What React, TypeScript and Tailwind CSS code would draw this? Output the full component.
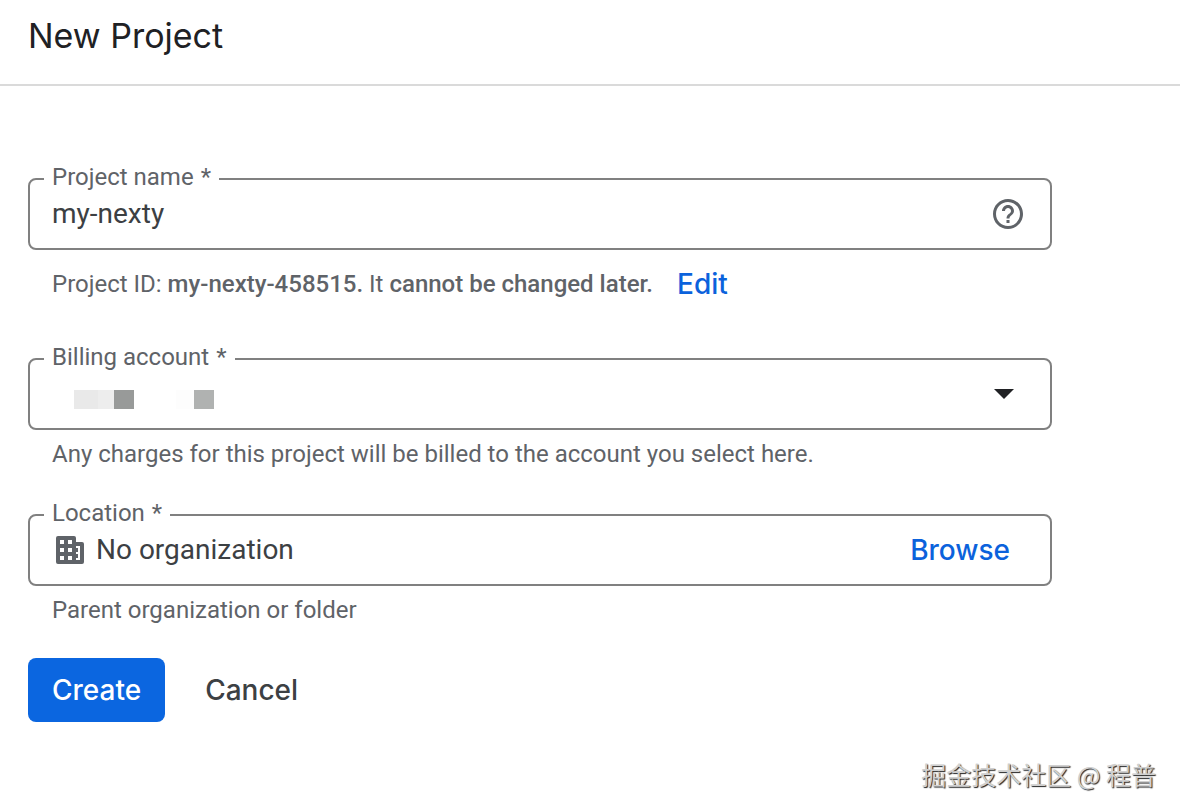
import { useState, type ReactNode } from 'react'
import { MdHelpOutline } from 'react-icons/md'

interface FieldProps {
  id:       string
  label:    string
  children: ReactNode
}

// Outlined box, the legend cuts the notch in the top border
function Field({ id, label, children }: FieldProps) {
  return (
    <fieldset className="min-w-0 rounded-lg border-2 border-[#808080] pb-[11px]">
      <legend className="ml-[14px] px-2 pb-1 text-2xl leading-5 text-[#5f6368]">
        <label htmlFor={id} className="flex gap-[7px]">{label} <span>*</span></label>
      </legend>
      <div className="relative flex h-[46px] items-center pl-[22px] pr-6">
        {children}
      </div>
    </fieldset>
  )
}

function OrgIcon() {
  return (
    <svg className="ml-1 shrink-0 text-[#5f6368]" width="28" height="28" viewBox="0 0 28 28" fill="currentColor" aria-hidden="true">
      <path
        fillRule="evenodd"
        d="M2 0h16a2 2 0 0 1 2 2v4h6a2 2 0 0 1 2 2v18a2 2 0 0 1-2 2H2a2 2 0 0 1-2-2V2a2 2 0 0 1 2-2z
           M4 4v4h4V4z M12 4v4h4V4z M4 12v4h4v-4z M12 12v4h4v-4z M4 20v4h4v-4z M12 20v4h4v-4z
           M20 10v2h2v4h-2v2h2v4h-2v2h4V10z"
      />
    </svg>
  )
}

export default function App() {
  const [name, setName] = useState('my-nexty')

  return (
    <div className="bg-white font-[Roboto,sans-serif] text-[#3c4043]">
      <header className="border-b-2 border-[#dadada] px-7 pb-6 pt-3">
        <h1 className="font-[Inter,sans-serif] text-[34px] leading-[48px] text-[#202124]">New Project</h1>
      </header>

      <form className="px-7 pt-[81px]" onSubmit={e => e.preventDefault()}>
        <div className="max-w-[1024px]">
          <Field id="name" label="Project name">
            <input
              id="name"
              value={name}
              onChange={e => setName(e.target.value)}
              className="min-w-0 flex-1 bg-transparent text-[28px] leading-9 focus:outline-none"
            />
            <button type="button" aria-label="Help" className="text-[#5f6368]">
              <MdHelpOutline size={36} />
            </button>
          </Field>
          <div className="mb-[29px] flex items-center gap-6 py-4 pl-6">
            <p className="text-2xl leading-9 text-[#5f6368]">
              Project ID: <b className="font-medium">my-nexty-458515.</b> It <b className="font-medium">cannot be changed later.</b>
            </p>
            <button type="button" className="font-[Inter,sans-serif] text-[28px] font-medium leading-9 text-[#0b62dc]">Edit</button>
          </div>

          <Field id="billing" label="Billing account">
            <select id="billing" className="h-full w-full appearance-none bg-transparent focus:outline-none">
              <option value="" />
            </select>
            <svg className="pointer-events-none absolute left-11 top-[19px]" width="140" height="19" shapeRendering="crispEdges" aria-hidden="true">
              <rect width="24" height="19" fill="#e9e9e9" />
              <rect x="24" width="16" height="19" fill="#ededed" />
              <rect x="40" width="20" height="19" fill="#989a99" />
              <rect x="102" width="18" height="19" fill="#fdfdfd" />
              <rect x="120" width="20" height="19" fill="#b0b2b1" />
            </svg>
            <svg className="pointer-events-none absolute right-9 top-[18px]" width="20" height="10" viewBox="0 0 20 10" aria-hidden="true">
              <path d="M0 0h20L10 10z" fill="#202124" />
            </svg>
          </Field>
          <p className="mb-[25px] py-3 pl-6 text-2xl leading-6 text-[#5f6368]">
            Any charges for this project will be billed to the account you select here.
          </p>

          <Field id="location" label="Location">
            <OrgIcon />
            <input
              id="location"
              readOnly
              value="No organization"
              className="ml-3 min-w-0 flex-1 bg-transparent text-[28px] leading-9 focus:outline-none"
            />
            <button type="button" className="mr-4 font-[Inter,sans-serif] text-[28px] font-medium leading-9 text-[#0b62dc]">Browse</button>
          </Field>
          <p className="mb-6 py-3 pl-6 text-2xl leading-6 text-[#5f6368]">Parent organization or folder</p>

          <div className="flex gap-4 font-[Inter,sans-serif] text-[28px] font-medium leading-9">
            <button type="submit" className="rounded-lg bg-[#0b66e0] px-6 py-[14px] text-white">Create</button>
            <button type="button" className="px-6 py-[14px]">Cancel</button>
          </div>
        </div>
      </form>

      <footer className="px-6 pb-4 pt-[34px] text-right font-['Noto_Sans_CJK_SC',sans-serif] text-[25px] leading-9 text-[#d0d0d0] [text-shadow:1px_1px_1px_#222]">
        掘金技术社区 @ 程普
      </footer>
    </div>
  )
}
